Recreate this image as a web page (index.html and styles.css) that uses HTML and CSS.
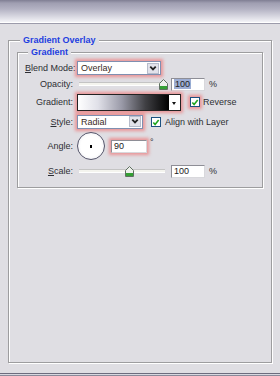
FILE: index.html
```html
<!DOCTYPE html>
<html lang="en">
<head>
    <meta charset="UTF-8">
    <meta name="viewport" content="width=device-width, initial-scale=1.0">
    <title>Gradient Overlay</title>
    <link rel="stylesheet" href="styles.css">
</head>
<body>
    <div class="topbar"></div>

    <div class="main">
        <fieldset class="group outer">
            <legend>Gradient Overlay</legend>

            <fieldset class="group inner">
                <legend>Gradient</legend>

                <div class="row r1">
                    <span class="lbl"><u>B</u>lend Mode:</span>
                    <div class="select blend glow">
                        <span class="val">Overlay</span>
                        <span class="drop"><svg width="11" height="11" viewBox="0 0 11 11"><path d="M2.5 3.5 L5.5 6.5 L8.5 3.5" fill="none" stroke="#222" stroke-width="2"/></svg></span>
                    </div>
                </div>

                <div class="row r2">
                    <span class="lbl">Opacity:</span>
                    <div class="slider opacity">
                        <div class="track"></div>
                        <svg class="thumb" style="left: 100%" width="9" height="11" viewBox="0 0 9 11"><path d="M0.5 4.5 L4.5 0.5 L8.5 4.5 V10.5 H0.5 Z" fill="#eef0ec" stroke="#5e7060"/><rect x="1" y="7" width="7" height="3" fill="#34a034"/></svg>
                    </div>
                    <div class="num"><span class="sel">100</span></div>
                    <span class="unit">%</span>
                </div>

                <div class="row r3">
                    <span class="lbl">Gradient:</span>
                    <div class="swatch glow">
                        <div class="ramp"></div>
                        <span class="arrow"></span>
                    </div>
                    <span class="check glow"><svg width="9" height="9" viewBox="0 0 9 9"><path d="M1.5 4.5 L3.5 6.8 L7.5 1.8" fill="none" stroke="#1fa51f" stroke-width="1.8"/></svg></span>
                    <span class="opt">Reverse</span>
                </div>

                <div class="row r4">
                    <span class="lbl"><u>S</u>tyle:</span>
                    <div class="select style glow">
                        <span class="val">Radial</span>
                        <span class="drop"><svg width="11" height="11" viewBox="0 0 11 11"><path d="M2.5 3.5 L5.5 6.5 L8.5 3.5" fill="none" stroke="#222" stroke-width="2"/></svg></span>
                    </div>
                    <span class="check align"><svg width="9" height="9" viewBox="0 0 9 9"><path d="M1.5 4.5 L3.5 6.8 L7.5 1.8" fill="none" stroke="#1fa51f" stroke-width="1.8"/></svg></span>
                    <span class="opt wide">Align with Layer</span>
                </div>

                <div class="row r5">
                    <span class="lbl">Angle:</span>
                    <div class="dial"><span class="dot"></span></div>
                    <div class="num angle glow">90</div>
                    <span class="deg">&deg;</span>
                </div>

                <div class="row r6">
                    <span class="lbl"><u>S</u>cale:</span>
                    <div class="slider scale">
                        <div class="track"></div>
                        <svg class="thumb" style="left: 62%" width="9" height="11" viewBox="0 0 9 11"><path d="M0.5 4.5 L4.5 0.5 L8.5 4.5 V10.5 H0.5 Z" fill="#eef0ec" stroke="#5e7060"/><rect x="1" y="7" width="7" height="3" fill="#34a034"/></svg>
                    </div>
                    <div class="num plain">100</div>
                    <span class="unit">%</span>
                </div>
            </fieldset>
        </fieldset>
    </div>

    <div class="footer"></div>
</body>
</html>
```

FILE: styles.css
```css
html, body {
    margin: 0;
    height: 100%;
}
body {
    display: flex;
    flex-direction: column;
    background-color: #dfdee3;
    color: #2e2e33;
    font-family: "Liberation Sans", Arial, sans-serif;
    font-size: 9px;
}
.topbar {
    height: 22px;
    flex: none;
    background: linear-gradient(to bottom, #7f7e93 0px, #9f9eb1 3px, #b3b2c3 9px, #f3f3f7 22px);
    border-bottom: 1px solid #ffffff;
    box-shadow: 0 1px 0 #9c9bab;
}
.main {
    flex: 1;
    display: flex;
    flex-direction: column;
    padding: 11px 8px 10px;
}
.group {
    margin: 0;
    min-width: 0;
    border: 1px solid #9d9d9f;
    box-shadow: inset 1px 1px 0 #ffffff, 1px 1px 0 #ffffff;
}
.group legend {
    margin-left: 3px;
    padding: 0 3px;
    line-height: 12px;
    font-weight: bold;
    font-size: 9px;
    color: #1e3fe0;
    background-color: #dfdee3;
}
.outer {
    flex: 1;
    padding: 0 8px;
}
.inner {
    padding: 2px 7px 6px;
}
.row {
    display: flex;
    align-items: center;
}
.r1 { height: 16px; }
.r2 { height: 16px; }
.r3 { height: 20px; }
.r4 { height: 19px; }
.r5 { height: 30px; }
.r6 { height: 20px; }
.lbl {
    width: 48px;
    margin-right: 4px;
    text-align: right;
    white-space: nowrap;
    flex: none;
}
.glow {
    box-shadow: 0 0 3px 2px rgba(240, 100, 100, 0.6);
}
.select {
    display: flex;
    align-items: center;
    height: 12px;
    border: 1px solid #7f8fb0;
    background-color: #ffffff;
    padding: 0 1px 0 3px;
}
.select .val {
    flex: 1;
    color: #3a2a1c;
}
.select .drop {
    display: flex;
    align-items: center;
    justify-content: center;
    width: 12px;
    height: 11px;
    background-color: #e2e2ea;
    border: 1px solid #b7bccb;
    box-sizing: border-box;
}
.blend { width: 78px; }
.style { width: 60px; }
.slider {
    position: relative;
    height: 11px;
    margin-left: 2px;
    display: flex;
    align-items: center;
}
.slider.opacity { width: 87px; }
.slider.scale { width: 86px; }
.track {
    width: 100%;
    height: 2px;
    background-color: #f4f4ee;
    border-top: 1px solid #c4c4c4;
    border-bottom: 1px solid #ffffff;
}
.thumb {
    position: absolute;
    top: 0;
    margin-left: -7px;
}
.num {
    width: 30px;
    height: 11px;
    line-height: 11px;
    margin-left: 5px;
    padding-left: 2px;
    background-color: #ffffff;
    border: 1px solid #8e8e96;
    border-color: #8e8e96 #d8d8dc #d8d8dc #8e8e96;
    color: #222;
}
.num .sel {
    background-color: #9dadd3;
    padding: 0 1px;
}
.num.plain { margin-left: 6px; }
.unit { margin-left: 4px; }
.swatch {
    display: flex;
    width: 102px;
    height: 15px;
    border: 1px solid #222;
    background-color: #ffffff;
}
.ramp {
    flex: 1;
    background: linear-gradient(to right, #ffffff 0%, #e0e0e8 22%, #9a9aa8 48%, #404044 74%, #000000 100%);
}
.arrow {
    width: 11px;
    position: relative;
}
.arrow::after {
    content: "";
    position: absolute;
    left: 3px;
    top: 7px;
    border-left: 2.5px solid transparent;
    border-right: 2.5px solid transparent;
    border-top: 3px solid #111;
}
.check {
    display: flex;
    width: 8px;
    height: 8px;
    border: 1px solid #1c5180;
    background-color: #ffffff;
    margin-left: 9px;
}
.check.align { margin-left: 8px; }
.opt { margin-left: 3px; }
.opt.wide { margin-left: 4px; }
.dial {
    width: 26px;
    height: 26px;
    border-radius: 50%;
    border: 1px solid #55556a;
    background: radial-gradient(circle, #ffffff 55%, #e6e6ec 100%);
    display: flex;
    align-items: center;
    justify-content: center;
}
.dot {
    width: 2px;
    height: 3px;
    background-color: #000;
}
.num.angle {
    width: 32px;
    margin-left: 6px;
}
.deg {
    align-self: flex-start;
    margin-top: 6px;
    margin-left: 3px;
}
.footer {
    flex: none;
    height: 1px;
    border-top: 1px solid #6c6c7e;
    border-bottom: 1px solid #8a8a9a;
    background-color: #d8d8e0;
}
```
